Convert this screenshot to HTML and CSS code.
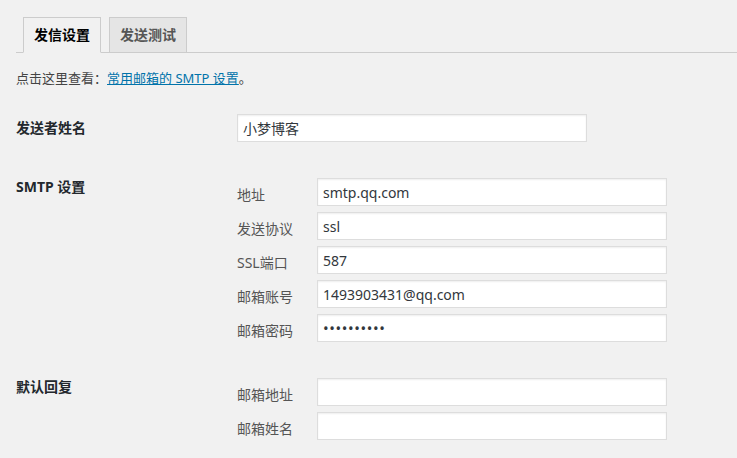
FILE: index.html
```html
<!DOCTYPE html>
<html>
  <head>
    <meta charset="utf-8">
    <title>邮件设置</title>
    <link rel="stylesheet" href="styles.css">
  </head>
  <body>
    <div class="wrap">
      <div class="nav-tabs">
        <a class="nav-tab nav-tab-active">发信设置</a>
        <a class="nav-tab">发送测试</a>
      </div>

      <p class="intro">点击这里查看：<a href="#" class="intro-link">常用邮箱的 SMTP 设置</a>。</p>

      <div class="form-row">
        <div class="row-label">发送者姓名</div>
        <div class="row-field">
          <input type="text" class="text-input" value="小梦博客">
        </div>
      </div>

      <div class="form-row">
        <div class="row-label">SMTP 设置</div>
        <div class="row-field sub-group">
          <div class="sub-row">
            <label class="sub-label">地址</label>
            <input type="text" class="text-input" value="smtp.qq.com">
          </div>
          <div class="sub-row">
            <label class="sub-label">发送协议</label>
            <input type="text" class="text-input" value="ssl">
          </div>
          <div class="sub-row">
            <label class="sub-label">SSL端口</label>
            <input type="text" class="text-input" value="587">
          </div>
          <div class="sub-row">
            <label class="sub-label">邮箱账号</label>
            <input type="text" class="text-input" value="1493903431@qq.com">
          </div>
          <div class="sub-row">
            <label class="sub-label">邮箱密码</label>
            <input type="password" class="text-input password-input" value="xiaomengbk">
          </div>
        </div>
      </div>

      <div class="form-row">
        <div class="row-label">默认回复</div>
        <div class="row-field sub-group">
          <div class="sub-row">
            <label class="sub-label">邮箱地址</label>
            <input type="text" class="text-input" value="">
          </div>
          <div class="sub-row">
            <label class="sub-label">邮箱姓名</label>
            <input type="text" class="text-input" value="">
          </div>
        </div>
      </div>
    </div>
  </body>
</html>
```

FILE: styles.css
```css
body {
  margin: 0;
  background-color: #f1f1f1;
  color: #444;
  font-family: "Noto Sans", "Noto Sans CJK SC", sans-serif;
  font-size: 13px;
}
.wrap {
  padding-left: 16px;
}
.nav-tabs {
  display: flex;
  gap: 8px;
  padding-top: 17px;
  padding-left: 7px;
  border-bottom: 1px solid #ccc;
}
.nav-tab {
  display: block;
  padding: 5px 10px;
  margin-bottom: -1px;
  font-size: 14px;
  font-weight: bold;
  line-height: 24px;
  color: #555;
  background-color: #e5e5e5;
  border: 1px solid #ccc;
  text-decoration: none;
}
.nav-tab-active {
  color: #000;
  background-color: #f1f1f1;
  border-bottom-color: #f1f1f1;
}
.intro {
  margin: 15px 0 26px;
  line-height: 20px;
}
.intro-link {
  color: #0073aa;
}
.form-row {
  display: flex;
  align-items: flex-start;
  margin-bottom: 31px;
}
.row-label {
  width: 221px;
  flex-shrink: 0;
  padding-top: 4px;
  font-size: 14px;
  font-weight: bold;
  line-height: 20px;
  color: #23282d;
}
.sub-group {
  display: flex;
  flex-direction: column;
  gap: 6px;
  padding-top: 5px;
}
.sub-row {
  display: flex;
  align-items: flex-start;
}
.sub-label {
  width: 80px;
  margin-left: -1px;
  padding-left: 1px;
  padding-top: 7px;
  font-size: 14px;
  line-height: 20px;
  color: #555;
}
.text-input {
  box-sizing: border-box;
  width: 350px;
  height: 28px;
  margin: 0;
  padding: 0 5px;
  font-family: "Noto Sans", "Noto Sans CJK SC", sans-serif;
  font-size: 14px;
  color: #32373c;
  background-color: #fff;
  border: 1px solid #ddd;
  box-shadow: inset 0 1px 2px rgba(0, 0, 0, 0.07);
  outline: none;
}
.password-input {
  font-size: 15px;
  letter-spacing: 0.6px;
}
```
